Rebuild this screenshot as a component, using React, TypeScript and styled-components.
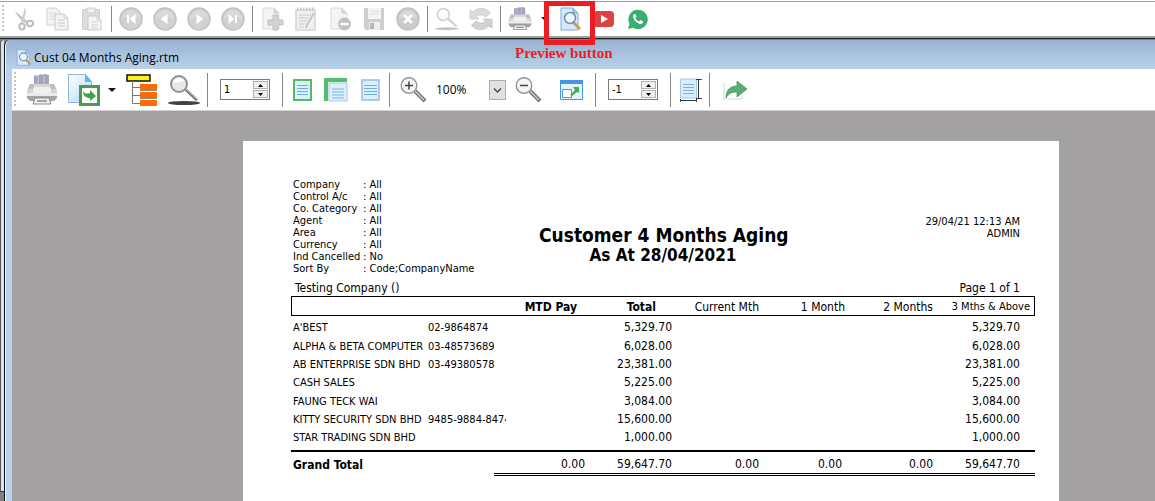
import React from "react";
import styled, { createGlobalStyle } from "styled-components";

const GlobalStyle = createGlobalStyle`
  * { box-sizing: border-box; }
  body {
    margin: 0;
    background: #808080;
    color: #000;
    font-family: "DejaVu Sans Condensed", "Noto Sans", sans-serif;
  }
  button, input, select { font: inherit; color: inherit; margin: 0; }
`;

const UI_FONT = `"Open Sans", "Noto Sans", sans-serif`;

const Screen = styled.div`
  display: flex;
  flex-direction: column;
  min-height: 100vh;
`;

const Toolbar = styled.header`
  display: flex;
  align-items: center;
  height: 37px;
  margin-top: 1px;
  background: #fff;
  border-top: 1px solid #a0a0a0;
  border-bottom: 2px solid #a0a0a0;
  box-shadow: 0 -1px #fff;
`;

const Grip = styled.span<{ $height: number; $space: number }>`
  width: 2px;
  height: ${(p) => p.$height}px;
  margin: 0 ${(p) => p.$space}px 0 2px;
  background: repeating-linear-gradient(#c4c4c4 0 2px, transparent 2px 4px);
`;

const ToolButton = styled.button<{ $width?: number }>`
  position: relative;
  display: flex;
  flex: none;
  align-items: center;
  justify-content: center;
  width: ${(p) => p.$width ?? 34}px;
  height: 34px;
  padding: 0;
  border: 0;
  background: none;
`;

const Separator = styled.span<{ $height?: number; $before?: number; $after?: number }>`
  flex: none;
  width: 1px;
  height: ${(p) => p.$height ?? 26}px;
  margin: 0 ${(p) => p.$after ?? 2}px 0 ${(p) => p.$before ?? 2}px;
  background: #868686;
`;

const Highlight = styled.span`
  position: absolute;
  z-index: 2;
  top: -1px;
  left: -9px;
  width: 51px;
  height: 44px;
  border: 5px solid #ed1c24;
`;

const Callout = styled.span`
  position: absolute;
  z-index: 2;
  top: 42px;
  left: -38px;
  font: bold 15px/18px "Liberation Serif", serif;
  color: #ed1c24;
  white-space: nowrap;
`;

const Workspace = styled.main`
  display: flex;
  flex: 1;
  padding-top: 1px;
  border-top: 1px solid #222;
`;

const BackWindowEdge = styled.div`
  width: 4px;
  margin-bottom: 9px;
  background: #d6e3f2;
  border-left: 1px solid #555;
  border-bottom: 1px solid #333;
  border-top-left-radius: 4px;
`;

const ReportWindow = styled.section`
  display: flex;
  flex: 1;
  flex-direction: column;
  min-width: 0;
  background: #b9d1ea;
  border-left: 1px solid #111;
  box-shadow: inset 1px 0 #f5f9fd;
  padding-left: 7px;
  border-top-left-radius: 6px;
`;

const TitleBar = styled.div`
  display: flex;
  align-items: center;
  gap: 2px;
  height: 29px;
  margin-left: -6px;
  padding: 6px 0 0 9px;
  background: linear-gradient(#99b3d1, #b9d1ea);
  border-top-left-radius: 6px;
  font: 12px/16px ${UI_FONT};
`;

const ReportToolbar = styled.div`
  display: flex;
  align-items: center;
  height: 42px;
  background: #fff;
  border-bottom: 1px solid #d2d0d0;
`;

const Spinner = styled.div`
  display: flex;
  flex: none;
  width: 50px;
  height: 21px;
  padding: 1px;
  border: 1px solid #7a7a7a;
  background: #fff;
`;

const SpinInput = styled.input`
  flex: 1;
  min-width: 0;
  padding: 0 2px;
  border: 0;
  background: none;
  font: 11px/16px "DejaVu Sans Condensed", sans-serif;
`;

const SpinSteps = styled.div`
  display: flex;
  flex-direction: column;
  width: 15px;
  gap: 1px;
`;

const StepButton = styled.button`
  display: flex;
  flex: 1;
  align-items: center;
  justify-content: center;
  min-height: 0;
  padding: 0;
  border: 1px solid #b0b0b0;
  background: #f0f0f0;
`;

const ZoomField = styled.div`
  position: relative;
  flex: none;
  width: 76px;
  height: 21px;
`;

const ZoomSelect = styled.select`
  appearance: none;
  width: 100%;
  height: 21px;
  padding: 0 20px 0 6px;
  border: 0;
  background: transparent;
  font: 12px/20px ${UI_FONT};
`;

const DropArrow = styled.span`
  position: absolute;
  top: 1px;
  right: 0;
  display: flex;
  align-items: center;
  justify-content: center;
  width: 17px;
  height: 20px;
  border: 1px solid #adadad;
  background: #e1e1e1;
  pointer-events: none;
`;

const Canvas = styled.div`
  flex: 1;
  padding: 30px 0 0 231px;
  background: #a4a1a3;
`;

const Paper = styled.article`
  display: flex;
  flex-direction: column;
  width: 816px;
  height: 100%;
  padding: 37px 24px 0 48px;
  background: #fff;
`;

const ReportHead = styled.div`
  display: grid;
  grid-template-columns: 1fr 248px 1fr;
  height: 102px;
`;

const Filters = styled.dl`
  display: grid;
  grid-template-columns: 70px 1fr;
  align-content: start;
  margin: 0;
  padding: 1px 0 0 2px;
  font-size: 11px;
  line-height: 12px;
  white-space: nowrap;
  dt, dd { margin: 0; }
`;

const Heading = styled.h1`
  margin: 46px 0 0;
  font-size: 19px;
  line-height: 22px;
  text-align: center;
  white-space: nowrap;
`;

const SubHeading = styled.span`
  display: block;
  font-size: 17px;
  line-height: 18px;
`;

const Stamp = styled.p`
  margin: 38px 15px 0 0;
  font-size: 11px;
  line-height: 12px;
  text-align: right;
`;

const CompanyLine = styled.div`
  display: flex;
  justify-content: space-between;
  padding: 0 15px 0 4px;
  font-size: 12px;
  line-height: 16px;
`;

const AgingTable = styled.table`
  width: 100%;
  table-layout: fixed;
  border-collapse: separate;
  border-spacing: 0;
  font-size: 12px;
  line-height: 16px;
  white-space: nowrap;
  th, td { padding: 0; }
  thead th {
    height: 20px;
    padding-top: 2px;
    border-top: 1px solid #000;
    border-bottom: 1px solid #000;
  }
  thead th:first-child { border-left: 1px solid #000; }
  thead th:last-child { border-right: 1px solid #000; }
  tbody td, tbody th { height: 18px; }
  tbody tr:nth-child(3n + 2) > * { height: 19px; }
  tbody::before, tbody::after {
    content: "";
    display: table-row;
    height: 2px;
  }
  tbody::after { height: 4px; }
  tfoot th, tfoot td {
    height: 26px;
    padding-top: 2px;
    border-top: 2px solid #000;
  }
  tfoot td { border-bottom: 3px double #000; }
`;

const TextCell = styled.th`
  && { padding: 2px 0 0 2px; }
  text-align: left;
  font-size: 11px;
  font-weight: normal;
`;

const TotalLabel = styled.th`
  && { padding-left: 2px; }
  text-align: left;
`;

const Phone = styled.span`
  display: block;
  width: 78px;
  padding-top: 2px;
  overflow: hidden;
  font-size: 11px;
`;

const HeadCell = styled.th<{ $inset: number; $strong?: boolean; $small?: boolean }>`
  && { padding-right: ${(p) => p.$inset}px; }
  text-align: right;
  font-weight: ${(p) => (p.$strong ? "bold" : "normal")};
  font-size: ${(p) => (p.$small ? 11 : 12)}px;
`;

const Amount = styled.td<{ $inset: number }>`
  && { padding-right: ${(p) => p.$inset}px; }
  text-align: right;
`;

const Svg = ({ w, h, children, vb }: { w: number; h: number; vb?: string; children: React.ReactNode }) => (
  <svg width={w} height={h} viewBox={vb ?? `0 0 ${w} ${h}`} fill="none" aria-hidden="true">
    {children}
  </svg>
);

const Cut = () => (
  <Svg w={24} h={24}>
    <path d="m3 4 12 10-2 2C9 13 5 9 3 4Z" fill="#c4c4c4" />
    <path d="m13 0 1 5-3 11-2-1z" fill="#cecece" />
    <ellipse cx="10" cy="19.500" rx="2.700" ry="3" stroke="#bdbdbd" strokeWidth="2" />
    <ellipse cx="18" cy="16.500" rx="3" ry="2.700" stroke="#bdbdbd" strokeWidth="2" />
  </Svg>
);

const Copy = () => (
  <Svg w={24} h={24}>
    <path d="M1 1h9l4 4v13H1z" fill="#f3f3f3" stroke="#d2d2d2" />
    <path d="M3 6h8M3 9h8M3 12h8" stroke="#d8d8d8" />
    <path d="M9 7h9l4 4v12H9z" fill="#f3f3f3" stroke="#cacaca" />
    <path d="M18 7v4h4M12 13h7M12 16h7M12 19h7" stroke="#cecece" />
  </Svg>
);

const Paste = () => (
  <Svg w={24} h={24}>
    <rect x="2.500" y="2.500" width="17" height="20" rx="1" fill="#dedede" stroke="#cdcdcd" />
    <path d="M7 1h8v5H7z" fill="#eee" stroke="#ccc" />
    <path d="M8 9h9l4 4v10H8z" fill="#f5f5f5" stroke="#c8c8c8" />
    <path d="M17 9v4h4M11 15h7M11 18h7M11 21h7" stroke="#d0d0d0" />
  </Svg>
);

const navShapes = {
  first: <path d="M8 8h2v8H8zM16.500 7v10l-6-5z" fill="#fff" />,
  prev: <path d="M14.500 7v10l-7-5z" fill="#fff" />,
  next: <path d="M9.500 7v10l7-5z" fill="#fff" />,
  last: <path d="M14 8h2v8h-2zM7.500 7v10l6-5z" fill="#fff" />,
  cancel: <path d="m8 8 8 8m0-8-8 8" stroke="#fff" strokeWidth="2.800" />,
};

const Round = ({ kind }: { kind: keyof typeof navShapes }) => (
  <Svg w={24} h={24}>
    <circle cx="12" cy="12" r="11" fill={kind === "cancel" ? "#c9c9c9" : "#d1d1d1"} stroke="#c2c2c2" strokeWidth="1.500" />
    <path d="M3 12a9 9 0 0 1 18 0c-5-3-13-3-18 0Z" fill="#dadada" />
    {navShapes[kind]}
  </Svg>
);

const NewDoc = () => (
  <Svg w={24} h={24}>
    <path d="M3 1h11l5 5v16H3z" fill="#f4f4f4" stroke="#dadada" />
    <path d="M14 1v5h5" fill="#d8d8d8" stroke="#ccc" />
    <path d="M13 8h5v5h5v5h-5v5h-5v-5H8v-5h5z" fill="#d2d2d2" stroke="#c0c0c0" />
  </Svg>
);

const Edit = () => (
  <Svg w={24} h={24}>
    <path d="M2 3h19v20H2z" fill="#f0f0f0" stroke="#d4d4d4" strokeWidth="1.500" />
    <path d="M3 2h18" stroke="#c6c6c6" strokeWidth="3" strokeDasharray="1.500 1.500" />
    <path d="M5 8h12M5 11h10M5 14h8M5 17h6M5 20h5" stroke="#cacaca" />
    <path d="m20 6-7 12-1 3" stroke="#c4c4c4" strokeWidth="2" />
  </Svg>
);

const DeleteDoc = () => (
  <Svg w={24} h={24}>
    <path d="M3 1h11l5 5v16H3z" fill="#f4f4f4" stroke="#dadada" />
    <path d="M14 1v5h5" fill="#d8d8d8" stroke="#ccc" />
    <circle cx="16.500" cy="17" r="6.500" fill="#c2c2c2" />
    <path d="M12.500 17h8" stroke="#fff" strokeWidth="2.500" />
  </Svg>
);

const Save = () => (
  <Svg w={24} h={24}>
    <path d="M2 1h20v22H4l-2-2z" fill="#cecece" />
    <path d="M6 1h13v11H6z" fill="#f5f5f5" />
    <path d="M8 4h9M8 7h9" stroke="#dedede" />
    <path d="M7 15h11v8H7z" fill="#eee" />
    <path d="M8 16h4v6H8z" fill="#b8b8b8" />
  </Svg>
);

const Lens = ({ faded }: { faded?: boolean }) => (
  <Svg w={faded ? 24 : 32} h={faded ? 24 : 32} vb="0 0 32 32">
    <ellipse cx="16" cy="29" rx="16" ry="2" fill={faded ? "#c4c4c4" : "#424242"} />
    <path d="m17 15 12 11" stroke={faded ? "#c9c9c9" : "#777"} strokeWidth="3" />
    <path d="m18 15 11 10" stroke={faded ? "#e5e5e5" : "#d0d0d0"} />
    <circle cx="11" cy="10" r="8" fill={faded ? "#fafafa" : "#e8e8e8"} stroke={faded ? "#cecece" : "#929292"} strokeWidth="2" />
    <path d="M5 9a6 6 0 0 1 11-2c-3 0-7 2-11 2Z" fill="#fff" />
  </Svg>
);

const Refresh = () => (
  <Svg w={24} h={24}>
    <path d="M1 3v9h9L7.500 9c3-2 7-1 9 1l5-4C17 0 8 0 4 5z" fill="#dcdcdc" stroke="#c9c9c9" strokeWidth=".8" />
    <path d="M23 21v-9h-9l2.500 3c-3 2-7 1-9-1l-5 4c4 6 13 6 17 1z" fill="#d2d2d2" stroke="#c2c2c2" strokeWidth=".8" />
  </Svg>
);

const Printer = ({ size }: { size: number }) => (
  <Svg w={size} h={size} vb="0 0 32 32">
    <path d="M8 2c2-2 3 1 5-1s3 1 5-1l5 1v12H8z" fill="#a3a3bc" />
    <path d="M12 2v8M18 2v8" stroke="#b7b7cc" strokeWidth="2" />
    <path d="M4 10h24l3 6v8l-3 3H4l-3-3v-8z" fill="#d6d6d6" />
    <path d="M4 10h4v3h16v-3h4l2 5H2z" fill="#bdbdbd" />
    <rect x="7" y="13" width="18" height="7" rx="2" fill="#f0f0f0" />
    <path d="M1 21h30v3l-3 3H4l-3-3z" fill="#a3a3a3" />
    <path d="M1 19h30v3H1z" fill="#ebebeb" />
    <path d="M9 24h14l2 6H7z" fill="#efefef" stroke="#8b8b8b" />
    <path d="M11 27h10" stroke="#888" strokeWidth="1.500" />
  </Svg>
);

const Caret = () => (
  <Svg w={8} h={4}>
    <path d="M0 0h8L4 4z" fill="#111" />
  </Svg>
);

const Preview = ({ size }: { size: number }) => (
  <Svg w={size} h={size} vb="0 0 24 24">
    <path d="M3 1h12l5 5v17H3z" fill="#d7eafb" stroke="#7ea8dc" />
    <path d="M15 1v5h5" fill="#9cc5ef" stroke="#7ea8dc" />
    <path d="m15 15 7 7" stroke="#d59a48" strokeWidth="3" />
    <circle cx="12" cy="11" r="5.500" fill="#eefaff" stroke="#6c8db8" strokeWidth="1.500" />
  </Svg>
);

const YouTube = () => (
  <Svg w={22} h={16}>
    <rect width="21" height="16" rx="4" fill="#db4343" />
    <path d="m8 4 7 4-7 4z" fill="#fff" />
  </Svg>
);

const WhatsApp = () => (
  <Svg w={20} h={20}>
    <path d="m0 20 1.500-5A9.700 9.700 0 1 1 5 18.700z" fill="#38ae70" />
    <path d="M6.500 5c-1.500.6-2 2.300-1 4.300 1.300 2.800 3.500 4.900 6.300 5.700 1.600.4 3.300-.7 3.300-2.500L12.500 11l-1.400 1.600C9.500 12 8 10.600 7.300 9l1.200-1.400L7.400 5z" fill="#fff" />
  </Svg>
);

const Export = () => (
  <Svg w={32} h={32}>
    <defs>
      <linearGradient id="sheet" x1="0" y1="0" x2="1" y2="1">
        <stop stopColor="#fff" />
        <stop offset="1" stopColor="#aed9f8" />
      </linearGradient>
    </defs>
    <path d="M.5.500h17l6 7v21H.5z" fill="url(#sheet)" stroke="#8fb3df" />
    <path d="M17 0v8h7z" fill="#65b2ef" />
    <path d="M12.500 12.500h18v18h-18z" fill="#fff" stroke="#4b9b4b" strokeWidth="3" />
    <path d="M15 17c2 3 4 3 7 2v-3l6 6-6 5v-3c-4 0-7-2-7-7Z" fill="#43a047" />
  </Svg>
);

const Tree = () => (
  <Svg w={32} h={32}>
    <path d="M1 1h23v6H1z" fill="#fff01c" stroke="#111" strokeWidth="1.500" />
    <path d="M6.500 7v22.500H14M6 13.500h8M6 21.500h8" stroke="#777" />
    <path d="M14 10h17v6H14zM14 18h17v6H14zM14 26h17v5H14z" fill="#ff6a00" />
    <path d="M14 16.500h17M14 24.500h17M14 31.500h17" stroke="#8b8b8b" />
  </Svg>
);

const PageFit = ({ kind }: { kind: "whole" | "width" | "actual" }) => {
  if (kind === "width") {
    return (
      <Svg w={24} h={24}>
        <path d="M0 0h23v4H4v19H0z" fill="#54be68" />
        <path d="M5 5h18v18H5z" fill="#ddeffb" stroke="#a9c6e8" />
        <path d="M8 11h12M8 14h12M8 17h12M8 20h12" stroke="#79b6e3" />
      </Svg>
    );
  }
  const whole = kind === "whole";
  return (
    <Svg w={19} h={22}>
      <path d="M1 1h17v20H1z" fill="#dceffc" stroke={whole ? "#54b969" : "#9cb9e5"} strokeWidth={whole ? 2 : 1.5} />
      <path d={whole ? "M4 6.500h11M4 9.500h11M4 12.500h11M4 15.500h11" : "M3 6.500h13M3 9.500h13M3 12.500h13M3 15.500h13"} stroke="#6fafdf" />
    </Svg>
  );
};

const Magnify = ({ plus }: { plus?: boolean }) => (
  <Svg w={27} h={26}>
    <path d="m15 14 10 10" stroke="#747474" strokeWidth="4" />
    <path d="m15 14 9 9" stroke="#c9c9c9" strokeWidth="1.500" />
    <circle cx="9" cy="8.500" r="7.800" fill="#f4f4f4" stroke="#999" strokeWidth="1.500" />
    <path d={plus ? "M5 8.500h8M9 4.500v8" : "M5 8.500h8"} stroke="#444" strokeWidth="1.500" />
  </Svg>
);

const FullScreen = () => (
  <Svg w={23} h={20}>
    <path d="M.5.500h22v19H.5z" fill="#e4f3ff" stroke="#4898df" />
    <path d="M0 0h23v4H0z" fill="#4594df" />
    <path d="M2.500 9.500h9v8h-9z" fill="#fff" stroke="#4898df" />
    <path d="m10 15 5-5-2-3h6v6l-2-1-5 4z" fill="#43b34a" />
  </Svg>
);

const Margins = () => (
  <Svg w={22} h={24}>
    <path d="M.5 1h16v19H.5z" fill="#d8edfc" stroke="#a7c6e8" />
    <path d="M3 6.500h11M3 9.500h11M3 12.500h11M3 15.500h11" stroke="#7ab4e2" />
    <path d="M18.500 1v19M16 1.500h6M16 20.500h6M1 22.500h15M.5 21v3M16.500 21v3" stroke="#333" />
    <path d="M21 1.500h1M21 20.500h1M0 23.500h1M16 23.500h1" stroke="#f0f" />
  </Svg>
);

const Share = () => (
  <Svg w={25} h={20}>
    <path d="M1 3v16h18v-4" stroke="#c9dfd0" />
    <path d="M3 18c0-8 4-12 11-12V1l10 8-10 8v-5c-5 0-8 1-11 6Z" fill="#57ad73" stroke="#438e5d" strokeWidth=".7" />
  </Svg>
);

const Spin = ({ label, value }: { label: string; value: string }) => (
  <Spinner>
    <SpinInput aria-label={label} defaultValue={value} />
    <SpinSteps>
      <StepButton aria-label={`${label} up`}>
        <Svg w={5} h={3}><path d="M0 3h5L2.500 0z" fill="#000" /></Svg>
      </StepButton>
      <StepButton aria-label={`${label} down`}>
        <Svg w={5} h={3}><path d="M0 0h5L2.500 3z" fill="#000" /></Svg>
      </StepButton>
    </SpinSteps>
  </Spinner>
);

const filters = [
  ["Company", "All"],
  ["Control A/c", "All"],
  ["Co. Category", "All"],
  ["Agent", "All"],
  ["Area", "All"],
  ["Currency", "All"],
  ["Ind Cancelled", "No"],
  ["Sort By", "Code;CompanyName"],
];

const columns = [
  { title: "MTD Pay", width: 91, headInset: 8, inset: 0, strong: true, total: "0.00" },
  { title: "Total", width: 87, headInset: 16, inset: 0, strong: true, total: "59,647.70" },
  { title: "Current Mth", width: 87, headInset: 0, inset: 0, total: "0.00" },
  { title: "1 Month", width: 86, headInset: 0, inset: 3, total: "0.00" },
  { title: "2 Months", width: 88, headInset: 0, inset: 0, total: "0.00" },
  { title: "3 Mths & Above", width: 102, headInset: 4, inset: 15, small: true, total: "59,647.70" },
];

const customers = [
  { name: "A'BEST", phone: "02-9864874", amount: "5,329.70" },
  { name: "ALPHA & BETA COMPUTER", phone: "03-48573689", amount: "6,028.00" },
  { name: "AB ENTERPRISE SDN BHD", phone: "03-49380578", amount: "23,381.00" },
  { name: "CASH SALES", phone: "", amount: "5,225.00" },
  { name: "FAUNG TECK WAI", phone: "", amount: "3,084.00" },
  { name: "KITTY SECURITY SDN BHD", phone: "9485-9884-8474", amount: "15,600.00" },
  { name: "STAR TRADING SDN BHD", phone: "", amount: "1,000.00" },
];

export default function App() {
  return (
    <Screen>
      <GlobalStyle />
      <Toolbar>
        <Grip $height={28} $space={3} />
        <ToolButton aria-label="Cut"><Cut /></ToolButton>
        <ToolButton aria-label="Copy"><Copy /></ToolButton>
        <ToolButton aria-label="Paste"><Paste /></ToolButton>
        <Separator />
        <ToolButton aria-label="First"><Round kind="first" /></ToolButton>
        <ToolButton aria-label="Previous"><Round kind="prev" /></ToolButton>
        <ToolButton aria-label="Next"><Round kind="next" /></ToolButton>
        <ToolButton aria-label="Last"><Round kind="last" /></ToolButton>
        <Separator />
        <ToolButton aria-label="New"><NewDoc /></ToolButton>
        <ToolButton aria-label="Edit"><Edit /></ToolButton>
        <ToolButton aria-label="Delete"><DeleteDoc /></ToolButton>
        <ToolButton aria-label="Save"><Save /></ToolButton>
        <ToolButton aria-label="Cancel"><Round kind="cancel" /></ToolButton>
        <Separator />
        <ToolButton aria-label="Find"><Lens faded /></ToolButton>
        <ToolButton aria-label="Refresh"><Refresh /></ToolButton>
        <Separator />
        <ToolButton aria-label="Print"><Printer size={24} /></ToolButton>
        <ToolButton aria-label="Print options" $width={16}><Caret /></ToolButton>
        <ToolButton aria-label="Preview">
          <Preview size={24} />
          <Highlight />
          <Callout>Preview button</Callout>
        </ToolButton>
        <ToolButton aria-label="YouTube"><YouTube /></ToolButton>
        <ToolButton aria-label="WhatsApp"><WhatsApp /></ToolButton>
      </Toolbar>
      <Workspace>
        <BackWindowEdge />
        <ReportWindow>
          <TitleBar>
            <Preview size={17} />
            Cust 04 Months Aging.rtm
          </TitleBar>
          <ReportToolbar>
            <Grip $height={36} $space={8} />
            <ToolButton aria-label="Print report" $width={36}><Printer size={32} /></ToolButton>
            <ToolButton aria-label="Export" $width={48}><Export /></ToolButton>
            <ToolButton aria-label="Export options" $width={8}><Caret /></ToolButton>
            <ToolButton aria-label="Outline" $width={52}><Tree /></ToolButton>
            <ToolButton aria-label="Search" $width={32}><Lens /></ToolButton>
            <Separator $height={34} $before={7} $after={12} />
            <Spin label="Page" value="1" />
            <Separator $height={34} $before={12} $after={2} />
            <ToolButton aria-label="Whole page"><PageFit kind="whole" /></ToolButton>
            <ToolButton aria-label="Page width"><PageFit kind="width" /></ToolButton>
            <ToolButton aria-label="Actual size"><PageFit kind="actual" /></ToolButton>
            <Separator $height={34} $before={2} $after={6} />
            <ToolButton aria-label="Zoom in"><Magnify plus /></ToolButton>
            <ZoomField>
              <ZoomSelect aria-label="Zoom" defaultValue="100%">
                <option>100%</option>
              </ZoomSelect>
              <DropArrow>
                <Svg w={9} h={5}><path d="m1 .5 3.500 3.500L8 .5" stroke="#444" strokeWidth="1.300" /></Svg>
              </DropArrow>
            </ZoomField>
            <ToolButton aria-label="Zoom out" $width={44}><Magnify /></ToolButton>
            <ToolButton aria-label="Full screen" $width={42}><FullScreen /></ToolButton>
            <Separator $height={34} $before={3} $after={12} />
            <Spin label="Copies" value="-1" />
            <Separator $height={34} $before={12} $after={4} />
            <ToolButton aria-label="Margins" $width={32}><Margins /></ToolButton>
            <Separator $height={34} $before={2} $after={8} />
            <ToolButton aria-label="Share"><Share /></ToolButton>
          </ReportToolbar>
          <Canvas>
            <Paper>
              <ReportHead>
                <Filters>
                  {filters.map(([name, value]) => (
                    <React.Fragment key={name}>
                      <dt>{name}</dt>
                      <dd>: {value}</dd>
                    </React.Fragment>
                  ))}
                </Filters>
                <Heading>
                  Customer 4 Months Aging
                  <SubHeading>As At 28/04/2021</SubHeading>
                </Heading>
                <Stamp>
                  29/04/21 12:13 AM
                  <br />
                  ADMIN
                </Stamp>
              </ReportHead>
              <CompanyLine>
                <span>Testing Company ()</span>
                <span>Page 1 of 1</span>
              </CompanyLine>
              <AgingTable>
                <colgroup>
                  <col width={137} />
                  <col width={66} />
                  {columns.map((c) => <col key={c.title} width={c.width} />)}
                </colgroup>
                <thead>
                  <tr>
                    <th />
                    <th />
                    {columns.map((c) => (
                      <HeadCell key={c.title} scope="col" $inset={c.headInset} $strong={c.strong} $small={c.small}>
                        {c.title}
                      </HeadCell>
                    ))}
                  </tr>
                </thead>
                <tbody>
                  {customers.map((row) => (
                    <tr key={row.name}>
                      <TextCell scope="row">{row.name}</TextCell>
                      <td><Phone>{row.phone}</Phone></td>
                      {columns.map((c, i) => (
                        <Amount key={c.title} $inset={c.inset}>
                          {i === 1 || i === 5 ? row.amount : ""}
                        </Amount>
                      ))}
                    </tr>
                  ))}
                </tbody>
                <tfoot>
                  <tr>
                    <TotalLabel scope="row" colSpan={2}>Grand Total</TotalLabel>
                    {columns.map((c) => (
                      <Amount key={c.title} $inset={c.inset}>{c.total}</Amount>
                    ))}
                  </tr>
                </tfoot>
              </AgingTable>
            </Paper>
          </Canvas>
        </ReportWindow>
      </Workspace>
    </Screen>
  );
}
